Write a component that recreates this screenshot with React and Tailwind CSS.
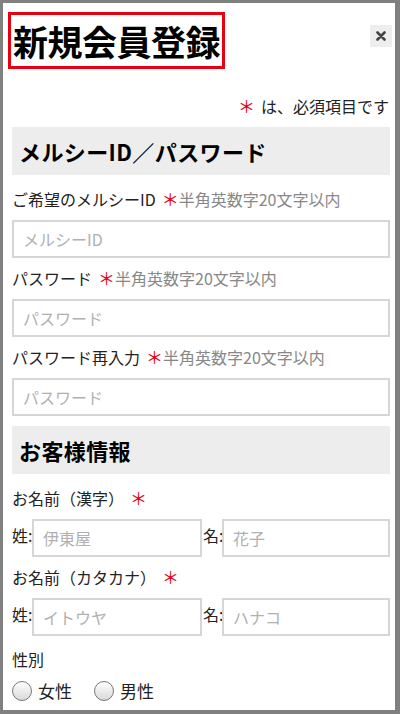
import React from 'react';

const font = { fontFamily: '"Noto Sans CJK JP", "Noto Sans", sans-serif' };

function Req() {
  return <span className="text-[#e60012] text-[17px]">＊</span>;
}

function Label({ text, hint, first }) {
  return (
    <div className={(first ? 'mt-[13px]' : 'mt-[9px]') + ' mb-[10px] text-[16px] leading-[22px] text-[#222] whitespace-nowrap'}>
      {text}<span className="inline-block w-[6px]" /><Req />
      {hint && <span className="text-[#888]">{hint}</span>}
    </div>
  );
}

function Field({ placeholder }) {
  return (
    <input
      type="text"
      placeholder={placeholder}
      className="block w-full h-[38px] border-2 border-[#d6d6d6] px-[9px] text-[16px] placeholder:text-[#b0b0b0] outline-none"
    />
  );
}

function SectionHead({ children }) {
  return (
    <div className="mt-[10px] bg-[#eeeded] h-[48px] flex items-center px-[7px] text-[22px] font-bold text-black tracking-[0.4px]">
      {children}
    </div>
  );
}

function NameRow({ sei, mei }) {
  return (
    <div className="flex items-start text-[16px] text-[#222]">
      <span className="w-[20px] leading-[32px]">姓:</span>
      <input
        type="text"
        placeholder={sei}
        className="w-[170px] min-w-0 h-[38px] border-2 border-[#d6d6d6] px-[9px] text-[16px] placeholder:text-[#b0b0b0] outline-none"
      />
      <span className="w-[19px] ml-[1px] leading-[32px]">名:</span>
      <input
        type="text"
        placeholder={mei}
        className="flex-1 min-w-0 h-[38px] border-2 border-[#d6d6d6] px-[9px] text-[16px] placeholder:text-[#b0b0b0] outline-none"
      />
    </div>
  );
}

function Radio({ label }) {
  return (
    <label className="flex items-center gap-[6px] text-[17px] leading-[22px] text-[#222]">
      <span className="w-[20px] h-[20px] rounded-full border border-[#777] bg-gradient-to-b from-white to-[#d9d9d9]" />
      {label}
    </label>
  );
}

export default function App() {
  return (
    <div className="w-[400px] h-[714px] bg-[#808080] pt-[3px] pl-[3px] pr-[5px] pb-[4px]" style={font}>
      <div className="bg-white h-full overflow-hidden pl-[9px] pr-[5px]">
        <div className="flex items-start justify-between pt-[9px]">
          <h1 className="border-[3px] border-[#e60012] -ml-[4px] px-[2px] h-[57px] flex items-center text-[35px] font-bold text-black leading-none tracking-[-0.5px]">
            新規会員登録
          </h1>
          <button className="mt-[13px] -mr-[2px] w-[22px] h-[22px] bg-[#eeeeee] flex items-center justify-center">
            <svg width="10" height="10" viewBox="0 0 10 10">
              <path d="M1.5 1.5 L8.5 8.5 M8.5 1.5 L1.5 8.5" stroke="#444" strokeWidth="2.6" strokeLinecap="round" />
            </svg>
          </button>
        </div>
        <div className="mt-[26px] text-right text-[16px] leading-[22px] text-[#222] mr-[1px]">
          <Req /><span className="inline-block w-[6px]" />は、必須項目です
        </div>
        <SectionHead>メルシーID／パスワード</SectionHead>
        <Label first text="ご希望のメルシーID" hint="半角英数字20文字以内" />
        <Field placeholder="メルシーID" />
        <Label text="パスワード" hint="半角英数字20文字以内" />
        <Field placeholder="パスワード" />
        <Label text="パスワード再入力" hint="半角英数字20文字以内" />
        <Field placeholder="パスワード" />
        <SectionHead>お客様情報</SectionHead>
        <Label first text="お名前（漢字）" />
        <NameRow sei="伊東屋" mei="花子" />
        <Label text="お名前（カタカナ）" />
        <NameRow sei="イトウヤ" mei="ハナコ" />
        <div className="mt-[12px] text-[16px] leading-[22px] text-[#222]">性別</div>
        <div className="mt-[10px] flex gap-[22px]">
          <Radio label="女性" />
          <Radio label="男性" />
        </div>
      </div>
    </div>
  );
}
